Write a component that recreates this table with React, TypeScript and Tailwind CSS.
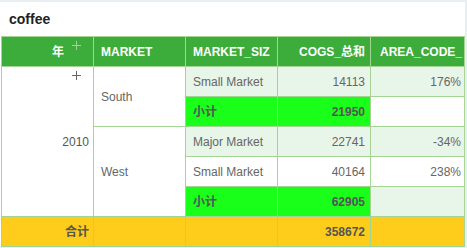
const lightGreen = "bg-[#e8f5e9]"
const subGreen = "bg-[#1aff1a]"
const yellow = "bg-[#fecc1a]"

function Plus({ color }: { color: string }) {
  return (
    <svg width="9" height="9" viewBox="0 0 9 9" className="absolute top-[4px] right-[12px]">
      <path d="M4.5 0V9M0 4.5H9" stroke={color} strokeWidth="1" />
    </svg>
  )
}

function Cell({
  children,
  className = "",
}: {
  children?: React.ReactNode
  className?: string
}) {
  return (
    <div className={`flex items-center overflow-hidden whitespace-nowrap text-[12px] ${className}`}>
      {children}
    </div>
  )
}

export default function App() {
  return (
    <div
      className="w-[467px] h-[248px] bg-[#e9eef3] pt-[2px]"
      style={{ fontFamily: '"Liberation Sans", "Noto Sans CJK SC", Arial, sans-serif' }}
    >
      <div className="w-[465px] h-[245px] bg-white pl-px">
        <div className="h-[34px] flex items-center pl-[8px] text-[14px] font-bold text-[#222]">coffee</div>

        <div className="grid grid-cols-[91px_91px_91px_92px_93px] auto-rows-[29px] gap-px p-px bg-[#a3d494] w-[464px]">
          {/* header */}
          <Cell className="relative justify-end pr-[29px] bg-[#3cac3a] font-bold text-white">
            年
            <Plus color="#a9cfa4" />
          </Cell>
          <Cell className="pl-[7px] bg-[#3cac3a] font-bold text-white">MARKET</Cell>
          <Cell className="pl-[7px] bg-[#3cac3a] font-bold text-white">MARKET_SIZ</Cell>
          <Cell className="justify-end pr-[5px] bg-[#3cac3a] font-bold text-white">COGS_总和</Cell>
          <Cell className="pl-[9px] bg-[#3cac3a] font-bold text-white">AREA_CODE_</Cell>

          {/* row 1 */}
          <Cell className="relative row-span-5 justify-end pr-[4px] bg-white text-[#555]">
            2010
            <Plus color="#666" />
          </Cell>
          <Cell className="row-span-2 pl-[7px] bg-white text-[#666]">South</Cell>
          <Cell className={`pl-[7px] ${lightGreen} text-[#666]`}>Small Market</Cell>
          <Cell className={`justify-end pr-[5px] ${lightGreen} text-[#666]`}>14113</Cell>
          <Cell className={`justify-end pr-[3px] ${lightGreen} text-[#666]`}>176%</Cell>

          {/* row 2 */}
          <Cell className={`pl-[7px] ${subGreen} font-bold text-[#555]`}>小计</Cell>
          <Cell className={`justify-end pr-[5px] ${subGreen} font-bold text-[#555]`}>21950</Cell>
          <Cell className="bg-white" />

          {/* row 3 */}
          <Cell className="row-span-3 pl-[7px] bg-white text-[#666]">West</Cell>
          <Cell className={`pl-[7px] ${lightGreen} text-[#666]`}>Major Market</Cell>
          <Cell className={`justify-end pr-[5px] ${lightGreen} text-[#666]`}>22741</Cell>
          <Cell className={`justify-end pr-[3px] ${lightGreen} text-[#666]`}>-34%</Cell>

          {/* row 4 */}
          <Cell className="pl-[7px] bg-white text-[#666]">Small Market</Cell>
          <Cell className="justify-end pr-[5px] bg-white text-[#666]">40164</Cell>
          <Cell className="justify-end pr-[3px] bg-white text-[#666]">238%</Cell>

          {/* row 5 */}
          <Cell className={`pl-[7px] ${subGreen} font-bold text-[#555]`}>小计</Cell>
          <Cell className={`justify-end pr-[5px] ${subGreen} font-bold text-[#555]`}>62905</Cell>
          <Cell className={lightGreen} />

          {/* total */}
          <Cell className={`justify-end pr-[4px] ${yellow} font-bold text-[#555]`}>合计</Cell>
          <Cell className={yellow} />
          <Cell className={yellow} />
          <Cell className={`justify-end pr-[5px] ${yellow} font-bold text-[#555]`}>358672</Cell>
          <Cell className={yellow} />
        </div>
      </div>
    </div>
  )
}
